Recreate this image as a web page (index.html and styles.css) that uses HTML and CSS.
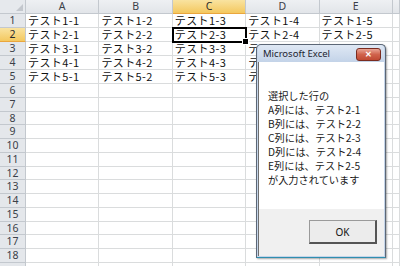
FILE: index.html
```html
<!DOCTYPE html>
<html lang="ja">
<head>
    <meta charset="UTF-8">
    <title>Excel - 選択した行</title>
    <link rel="stylesheet" href="styles.css">
</head>
<body>
    <div class="sheet" id="sheet"></div>

    <!-- Message Box -->
    <div class="msgbox">
        <div class="msgbox-title">
            <span>Microsoft Excel</span>
            <button class="close-btn">&#x2715;</button>
        </div>
        <div class="msgbox-body">
            <p>選択した行の</p>
            <p>A列には、テスト2-1</p>
            <p>B列には、テスト2-2</p>
            <p>C列には、テスト2-3</p>
            <p>D列には、テスト2-4</p>
            <p>E列には、テスト2-5</p>
            <p>が入力されています</p>
        </div>
        <div class="msgbox-footer">
            <button class="ok-btn">OK</button>
        </div>
    </div>

    <script>
        // Sheet data
        const COLS = ['A', 'B', 'C', 'D', 'E', ''];
        const ROW_COUNT = 19;
        const ACTIVE = { col: 2, row: 2 };

        const sheet = document.getElementById('sheet');

        function cell(cls, text) {
            const div = document.createElement('div');
            div.className = cls;
            div.textContent = text || '';
            sheet.appendChild(div);
            return div;
        }

        // Header row
        cell('corner');
        COLS.forEach((name, i) => {
            cell('col-head' + (i === ACTIVE.col ? ' selected' : ''), name);
        });

        // Body rows
        for (let r = 1; r <= ROW_COUNT; r++) {
            cell('row-head' + (r === ACTIVE.row ? ' selected' : ''), r < ROW_COUNT ? r : '');
            COLS.forEach((name, c) => {
                const text = (r <= 5 && name) ? `テスト${r}-${c + 1}` : '';
                const isActive = r === ACTIVE.row && c === ACTIVE.col;
                cell('cell' + (isActive ? ' active' : ''), text);
            });
        }
    </script>
</body>
</html>
```

FILE: styles.css
```css
/* Base */
* {
    margin: 0;
    padding: 0;
    box-sizing: border-box;
}

body {
    width: 400px;
    height: 266px;
    overflow: hidden;
    background: #fff;
    font-family: "Noto Sans CJK JP", "Noto Sans", sans-serif;
    position: relative;
}

/* Sheet grid */
.sheet {
    display: grid;
    grid-template-columns: 26px repeat(5, 73.4px) 1fr;
    grid-template-rows: 14px repeat(5, 14px) repeat(14, 13.77px);
}

.sheet > div {
    border-right: 1px solid #dadcdd;
    border-bottom: 1px solid #dadcdd;
    font-size: 10.5px;
    line-height: 13px;
    white-space: nowrap;
}

.corner {
    background: #e6e9ed;
    position: relative;
}

.corner::after {
    content: "";
    position: absolute;
    right: 2px;
    bottom: 2px;
    border-left: 7px solid transparent;
    border-bottom: 7px solid #c3c7cd;
}

.sheet > .corner,
.sheet > .col-head,
.sheet > .row-head {
    border-color: #c3c8ce;
    color: #3b4048;
    font-family: "Noto Sans", sans-serif;
    text-align: center;
}

.col-head {
    background: linear-gradient(#eef0f3, #e2e5e9);
}

.row-head {
    background: #e4e7eb;
    border-right-color: #b9bec5;
}

.sheet > .selected {
    background: linear-gradient(#f9e3a0, #f4c85f);
    border-bottom-color: #eaa63d;
    color: #2a2a2a;
}

.sheet > .cell {
    padding-left: 2px;
    font-size: 11px;
    letter-spacing: 0.4px;
    color: #111;
}

.cell.active {
    outline: 2px solid #000;
    outline-offset: -1px;
    position: relative;
}

.cell.active::after {
    content: "";
    position: absolute;
    right: -4px;
    bottom: -4px;
    width: 5px;
    height: 5px;
    background: #000;
    border: 1px solid #fff;
}

/* Message box */
.msgbox {
    position: absolute;
    left: 256px;
    top: 44px;
    width: 130px;
    height: 214px;
    display: flex;
    flex-direction: column;
    border: 1px solid #5c6776;
    border-bottom-color: #2f8fb0;
    border-radius: 5px 5px 0 0;
    background: #c5d5e9;
    padding: 0 1px 1px;
    box-shadow: 1px 1px 2px rgba(0, 0, 0, 0.35);
}

.msgbox-title {
    height: 17px;
    display: flex;
    align-items: center;
    justify-content: space-between;
    padding: 0 3px 0 5px;
    background: linear-gradient(#dfe8f4, #c3d3e8);
    border-radius: 4px 4px 0 0;
    font-family: "Noto Sans", sans-serif;
    font-size: 9.5px;
    color: #1d2430;
}

.close-btn {
    width: 25px;
    height: 13px;
    margin-top: 2px;
    border: 1px solid #7a2c20;
    border-radius: 3px;
    background: linear-gradient(#e9a595, #d0634c 50%, #c04a33);
    color: #fff;
    font-size: 8px;
    font-weight: bold;
    line-height: 11px;
}

.msgbox-body {
    flex: 1;
    background: #fff;
    border-left: 1px solid #6f6f6f;
    padding: 27px 0 0 9px;
    font-size: 10.2px;
    line-height: 14px;
    color: #1a1a1a;
}

.msgbox-footer {
    height: 47px;
    display: flex;
    justify-content: flex-end;
    align-items: flex-start;
    padding: 11px 7px 0 0;
    background: #f0f0f0;
    border-left: 1px solid #6f6f6f;
}

.ok-btn {
    width: 68px;
    height: 24px;
    border: 1px solid #9a9a9a;
    border-right: 2px solid #555;
    border-bottom: 2px solid #555;
    background: #ececec;
    font-family: "Noto Sans", sans-serif;
    font-size: 10px;
    color: #111;
}
```
